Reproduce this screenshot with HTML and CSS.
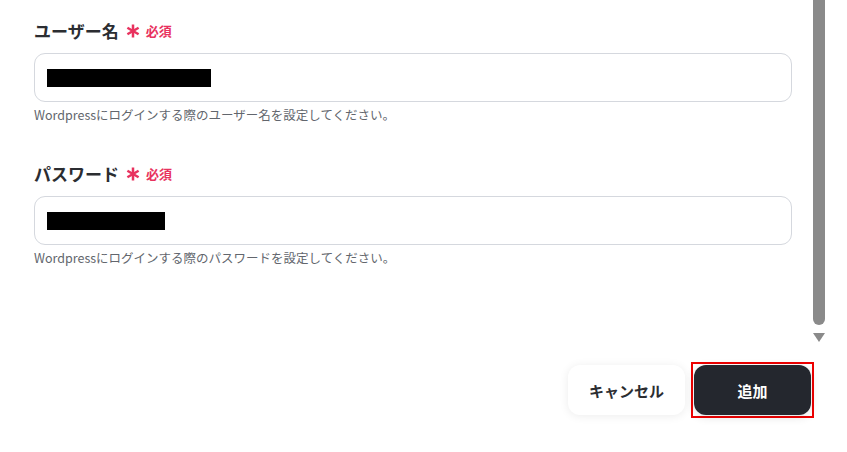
FILE: index.html
```html
<!DOCTYPE html>
<html lang="ja">
<head>
<meta charset="utf-8">
<link rel="stylesheet" href="styles.css">
</head>
<body>
<div class="page">
  <form class="form">
    <div class="field">
      <label class="label">ユーザー名<span class="req"><svg class="ast" viewBox="0 0 14 14" width="14" height="14"><g stroke="#e8325e" stroke-width="2.5" stroke-linecap="butt"><line x1="7" y1="0.5" x2="7" y2="13.5"/><line x1="1.4" y1="3.75" x2="12.6" y2="10.25"/><line x1="1.4" y1="10.25" x2="12.6" y2="3.75"/></g></svg>必須</span></label>
      <div class="input"><span class="mask mask-1"></span></div>
      <p class="help">Wordpressにログインする際のユーザー名を設定してください。</p>
    </div>
    <div class="field">
      <label class="label">パスワード<span class="req"><svg class="ast" viewBox="0 0 14 14" width="14" height="14"><g stroke="#e8325e" stroke-width="2.5" stroke-linecap="butt"><line x1="7" y1="0.5" x2="7" y2="13.5"/><line x1="1.4" y1="3.75" x2="12.6" y2="10.25"/><line x1="1.4" y1="10.25" x2="12.6" y2="3.75"/></g></svg>必須</span></label>
      <div class="input"><span class="mask mask-2"></span></div>
      <p class="help">Wordpressにログインする際のパスワードを設定してください。</p>
    </div>
  </form>
  <div class="actions">
    <button class="btn btn-cancel" type="button">キャンセル</button>
    <div class="highlight"><button class="btn btn-add" type="button">追加</button></div>
  </div>
  <div class="scrollbar"><div class="thumb"></div><div class="arrow"></div></div>
</div>
</body>
</html>
```
FILE: styles.css
```css
* { box-sizing: border-box; }
html, body { margin: 0; padding: 0; background: #fff; }
body {
  font-family: "Noto Sans CJK JP", "Noto Sans", sans-serif;
  color: #2b2d31;
  width: 847px;
  height: 452px;
  overflow: hidden;
}
.page {
  position: relative;
  height: 452px;
  padding: 19px 55px 0 34px;
}
.form { display: flex; flex-direction: column; gap: 38px; }
.field { display: flex; flex-direction: column; }
.label {
  font-size: 17px;
  font-weight: 700;
  line-height: 24px;
  height: 24px;
  display: flex;
  align-items: center;
  color: #2b2d31;
}
.req {
  display: inline-flex;
  align-items: center;
  color: #e8325e;
  font-size: 13px;
  font-weight: 700;
  margin-left: 7px;
}
.ast { display: block; margin-right: 6px; }
.input {
  margin-top: 10px;
  height: 49px;
  border: 1px solid #d5d8de;
  border-radius: 11px;
  display: flex;
  align-items: center;
  padding-left: 12px;
}
.mask { display: block; background: #000; height: 18px; }
.mask-1 { width: 164px; }
.mask-2 { width: 118px; }
.help {
  margin: 4px 0 0;
  font-size: 12.5px;
  line-height: 18px;
  color: #62666d;
}
.actions {
  display: flex;
  justify-content: flex-end;
  align-items: center;
  gap: 6px;
  margin-top: 95px;
  margin-right: -22px;
}
.highlight {
  border: 2px solid #ee0000;
  padding: 1px;
}
.btn {
  display: block;
  width: 117px;
  height: 50px;
  border: none;
  border-radius: 12px;
  font-family: "Noto Sans CJK JP", "Noto Sans", sans-serif;
  font-size: 15px;
  font-weight: 700;
}
.btn-cancel {
  background: #fff;
  color: #2b2d31;
  box-shadow: 0 1px 10px rgba(0,0,0,0.08);
}
.btn-add {
  background: #24272e;
  color: #fff;
  box-shadow: 0 2px 10px rgba(0,0,0,0.12);
}
.scrollbar {
  position: absolute;
  top: 0;
  left: 813px;
  width: 12px;
}
.thumb {
  height: 325px;
  background: #8a8a8a;
  border-radius: 0 0 6px 6px;
}
.arrow {
  margin: 8px auto 0;
  width: 0;
  height: 0;
  border-left: 6px solid transparent;
  border-right: 6px solid transparent;
  border-top: 9px solid #8a8a8a;
}
```
